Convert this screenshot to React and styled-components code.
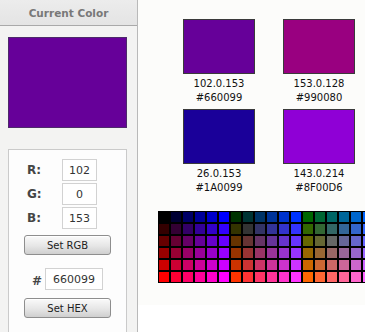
import React from "react";
import styled, { createGlobalStyle } from "styled-components";

const Global = createGlobalStyle`
  html, body { margin: 0; padding: 0; background: #ffffff; }
  body { font-family: "DejaVu Sans", Verdana, sans-serif; }
  * { box-sizing: border-box; }
`;

const Page = styled.div`
  display: flex;
  align-items: flex-start;
  width: 382px;
  height: 332px;
  overflow: hidden;
  background: #ffffff;
`;

const Side = styled.aside`
  width: 138px;
  height: 332px;
  flex: none;
  display: flex;
  flex-direction: column;
  background: #f3f3f2;
  border-right: 1px solid #b9b9b9;
`;

const SideHeader = styled.div`
  height: 26px;
  flex: none;
  display: flex;
  align-items: center;
  justify-content: center;
  background: linear-gradient(#ececec, #e4e4e4);
  border-bottom: 1px solid #a9a9a9;
  color: #787878;
  font-weight: bold;
  font-size: 10.5px;
`;

const CurrentSwatch = styled.div`
  margin: 11px 0 0 8px;
  width: 119px;
  height: 91px;
  flex: none;
  background: ${(p) => p.$color};
  border: 1px solid #4d2a6a;
`;

const ControlBox = styled.div`
  margin: 21px 0 0 8px;
  width: 119px;
  flex: 1;
  background: #fdfdfd;
  border: 1px solid #cacaca;
  border-bottom: none;
  padding: 9px 0 0 0;
  display: flex;
  flex-direction: column;
  align-items: center;
`;

const ChannelList = styled.div`
  display: flex;
  flex-direction: column;
  gap: 2px;
  align-self: stretch;
  padding-left: 18px;
`;

const ChannelRow = styled.div`
  display: flex;
  align-items: center;
`;

const ChannelLabel = styled.span`
  width: 35px;
  font-weight: bold;
  font-size: 12px;
  color: #454545;
`;

const ValueInput = styled.input`
  width: ${(p) => p.$w}px;
  height: 22px;
  border: 1px solid #d2d2d2;
  background: #ffffff;
  color: #333333;
  font-family: "DejaVu Sans", Verdana, sans-serif;
  font-size: 11px;
  text-align: center;
  padding: 0;
  outline: none;
`;

const ActionButton = styled.button`
  width: 87px;
  height: 20px;
  margin-top: ${(p) => p.$mt}px;
  border: 1px solid #8e8e8e;
  border-radius: 3px;
  background: linear-gradient(#fafafa, #e6e6e6 55%, #cfcfcf);
  color: #222222;
  font-family: "DejaVu Sans", Verdana, sans-serif;
  font-size: 10px;
  padding: 0;
  box-shadow: 0 1px 0 #ffffff inset;
`;

const HexRow = styled.div`
  display: flex;
  align-items: center;
  gap: 3px;
  margin-top: 13px;
`;

const HashLabel = styled.span`
  font-weight: bold;
  font-size: 12px;
  color: #454545;
  padding-top: 4px;
`;

const Main = styled.main`
  width: 227px;
  height: 305px;
  flex: none;
  background: #fcfcfa;
  overflow: hidden;
  padding: 19px 0 0 20px;
`;

const SwatchGrid = styled.div`
  display: grid;
  grid-template-columns: 72px 72px;
  column-gap: 28px;
  row-gap: 4px;
  margin-left: 25px;
`;

const SwatchCard = styled.div`
  display: flex;
  flex-direction: column;
  align-items: center;
`;

const Swatch = styled.div`
  width: 72px;
  height: 55px;
  background: ${(p) => p.$color};
  border: 1px solid #3a3a3a;
`;

const SwatchText = styled.div`
  margin-top: 3px;
  font-size: 10px;
  line-height: 14px;
  color: #111111;
  text-align: center;
  white-space: nowrap;
`;

const Palette = styled.div`
  margin-top: 16px;
  display: grid;
  grid-template-columns: repeat(18, 10px);
  grid-auto-rows: 10px;
  gap: 2px;
  padding: 1px;
  background: #000000;
  width: max-content;
`;

const PaletteCell = styled.div`
  background: ${(p) => p.$color};
`;

const hex2 = (n) => n.toString(16).padStart(2, "0").toUpperCase();

const swatches = [
  { color: "#660099", rgb: "102.0.153", hex: "#660099" },
  { color: "#990080", rgb: "153.0.128", hex: "#990080" },
  { color: "#1A0099", rgb: "26.0.153", hex: "#1A0099" },
  { color: "#8F00D6", rgb: "143.0.214", hex: "#8F00D6" },
];

const paletteColors = [];
for (let r = 0; r < 6; r++) {
  for (let c = 0; c < 18; c++) {
    const R = r * 0x33;
    const G = Math.floor(c / 6) * 0x33;
    const B = (c % 6) * 0x33;
    paletteColors.push(`#${hex2(R)}${hex2(G)}${hex2(B)}`);
  }
}

export default function App() {
  return (
    <>
      <Global />
      <Page>
        <Side>
          <SideHeader>Current Color</SideHeader>
          <CurrentSwatch $color="#660099" />
          <ControlBox>
            <ChannelList>
              <ChannelRow>
                <ChannelLabel>R:</ChannelLabel>
                <ValueInput $w={35} defaultValue="102" />
              </ChannelRow>
              <ChannelRow>
                <ChannelLabel>G:</ChannelLabel>
                <ValueInput $w={35} defaultValue="0" />
              </ChannelRow>
              <ChannelRow>
                <ChannelLabel>B:</ChannelLabel>
                <ValueInput $w={35} defaultValue="153" />
              </ChannelRow>
            </ChannelList>
            <ActionButton $mt={6}>Set RGB</ActionButton>
            <HexRow>
              <HashLabel>#</HashLabel>
              <ValueInput $w={58} defaultValue="660099" />
            </HexRow>
            <ActionButton $mt={8}>Set HEX</ActionButton>
          </ControlBox>
        </Side>
        <Main>
          <SwatchGrid>
            {swatches.map((s) => (
              <SwatchCard key={s.hex}>
                <Swatch $color={s.color} />
                <SwatchText>
                  {s.rgb}
                  <br />
                  {s.hex}
                </SwatchText>
              </SwatchCard>
            ))}
          </SwatchGrid>
          <Palette>
            {paletteColors.map((c, i) => (
              <PaletteCell key={i} $color={c} />
            ))}
          </Palette>
        </Main>
      </Page>
    </>
  );
}
